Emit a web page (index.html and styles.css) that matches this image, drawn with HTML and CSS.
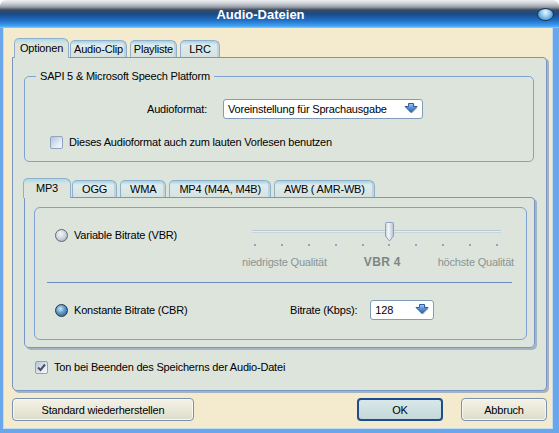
FILE: index.html
```html
<!DOCTYPE html>
<html lang="de">
<head>
  <meta charset="UTF-8">
  <title>Audio-Dateien</title>
  <link rel="stylesheet" href="styles.css">
</head>
<body>
  <div class="window">
    <div class="titlebar">
      <span class="title">Audio-Dateien</span>
      <span class="orb"></span>
    </div>

    <div class="client">
      <div class="tabs">
        <div class="tab active">Optionen</div>
        <div class="tab">Audio-Clip</div>
        <div class="tab">Playliste</div>
        <div class="tab">LRC</div>
      </div>

      <div class="panel">
        <fieldset class="group">
          <legend>SAPI 5 &amp; Microsoft Speech Platform</legend>
          <div class="format-row">
            <span class="format-label">Audioformat:</span>
            <div class="combo combo-format">
              <span>Voreinstellung für Sprachausgabe</span>
              <svg class="arrow" width="16" height="13" viewBox="0 0 16 13">
                <path d="M5.5 1.5 H10.5 V4.5 H14 L8 10.5 L2 4.5 H5.5 Z" fill="#a8acb0" opacity="0.7"/>
                <path d="M4.5 0.5 H9.5 V3.5 H13 L7 9.5 L1 3.5 H4.5 Z" fill="url(#arrowFill)" stroke="#2c5c9c" stroke-width="1"/>
                <defs>
                  <linearGradient id="arrowFill" x1="0" y1="0" x2="0" y2="1">
                    <stop offset="0" stop-color="#a9cdf2"/>
                    <stop offset="0.45" stop-color="#5b93d6"/>
                    <stop offset="1" stop-color="#2d62ad"/>
                  </linearGradient>
                </defs>
              </svg>
            </div>
          </div>
          <label class="check"><span class="box"></span>Dieses Audioformat auch zum lauten Vorlesen benutzen</label>
        </fieldset>

        <div class="tabs sub">
          <div class="tab active">MP3</div>
          <div class="tab">OGG</div>
          <div class="tab">WMA</div>
          <div class="tab">MP4 (M4A, M4B)</div>
          <div class="tab">AWB ( AMR-WB)</div>
        </div>

        <div class="subpanel">
          <div class="inner">
            <div class="vbr-row">
              <label class="radio"><span class="dot"></span>Variable Bitrate (VBR)</label>
              <div class="slider">
                <div class="track-area">
                  <div class="track"></div>
                  <svg class="thumb" width="11" height="20" viewBox="0 0 11 20">
                    <path d="M1.5 1.5 Q1.5 0.5 2.5 0.5 H8.5 Q9.5 0.5 9.5 1.5 V14 L5.5 19 L1.5 14 Z" fill="url(#thumbFill)" stroke="#8aa2bc"/>
                    <defs>
                      <linearGradient id="thumbFill" x1="0" y1="0" x2="1" y2="0">
                        <stop offset="0" stop-color="#c4d2de"/>
                        <stop offset="0.4" stop-color="#f4f8fb"/>
                        <stop offset="1" stop-color="#aebfcf"/>
                      </linearGradient>
                    </defs>
                  </svg>
                </div>
                <div class="ticks">
                  <i></i><i></i><i></i><i></i><i></i><i></i><i></i><i></i><i></i><i></i>
                </div>
                <div class="scale-labels">
                  <span>niedrigste Qualität</span>
                  <b>VBR 4</b>
                  <span>höchste Qualität</span>
                </div>
              </div>
            </div>

            <div class="separator"></div>

            <div class="cbr-row">
              <label class="radio selected"><span class="dot"></span>Konstante Bitrate (CBR)</label>
              <span class="bitrate-label">Bitrate (Kbps):</span>
              <div class="combo combo-bitrate">
                <span>128</span>
                <svg class="arrow" width="16" height="13" viewBox="0 0 16 13">
                  <path d="M5.5 1.5 H10.5 V4.5 H14 L8 10.5 L2 4.5 H5.5 Z" fill="#a8acb0" opacity="0.7"/>
                  <path d="M4.5 0.5 H9.5 V3.5 H13 L7 9.5 L1 3.5 H4.5 Z" fill="url(#arrowFill)" stroke="#2c5c9c" stroke-width="1"/>
                </svg>
              </div>
            </div>
          </div>
        </div>

        <label class="check checked end-sound">
          <span class="box">
            <svg width="11" height="11" viewBox="0 0 11 11"><path d="M2 5.5 L4.5 8 L9 2.5" fill="none" stroke="#4a5058" stroke-width="2"/></svg>
          </span>Ton bei Beenden des Speicherns der Audio-Datei
        </label>
      </div>

      <div class="buttons">
        <button class="btn btn-reset">Standard wiederherstellen</button>
        <button class="btn btn-default">OK</button>
        <button class="btn">Abbruch</button>
      </div>
    </div>
  </div>
</body>
</html>
```

FILE: styles.css
```css
* {
  box-sizing: border-box;
}
body {
  margin: 0;
  background: #fff;
  font-family: "Liberation Sans", Arial, sans-serif;
  font-size: 11px;
  letter-spacing: -0.2px;
  color: #000;
}
.window {
  width: 559px;
  height: 433px;
  display: flex;
  flex-direction: column;
}

/* title bar */
.titlebar {
  height: 28px;
  position: relative;
  border-radius: 6px 6px 0 0;
  background: linear-gradient(#eef0f2 0, #d2d6da 3px, #98a0aa 7px, #3a4a60 10px, #1a4a88 14px, #1f6cc0 20px, #3798ee 25px, #58b2f8 27px, #a6d2f7 28px);
  text-align: center;
  padding-right: 38px;
}
.title {
  display: inline-block;
  margin-top: 8px;
  color: #fff;
  font-size: 13px;
  font-weight: bold;
  letter-spacing: 0;
  line-height: 14px;
}
.orb {
  position: absolute;
  left: 537px;
  top: 8px;
  width: 17px;
  height: 13px;
  border-radius: 50%;
  border: 1px solid #1b3650;
  background: radial-gradient(ellipse at 50% 30%, #e8f6ff 0, #9fd2f4 35%, #4f97cc 75%, #2a6494 100%);
}

/* dialog body */
.client {
  flex: 1;
  background: #f4eacd;
  border-style: solid;
  border-color: #6aa6ea;
  border-width: 0 6px 4px 3px;
  box-shadow: inset 1px 0 #c2dcf6, inset -1px -1px #c2dcf6;
  padding: 10px 6px 0 9px;
}

/* tab strips */
.tabs {
  display: flex;
  align-items: flex-end;
  padding-left: 4px;
  height: 19px;
  position: relative;
  z-index: 1;
}
.tab {
  height: 17px;
  min-width: 40px;
  text-align: center;
  line-height: 16px;
  padding: 0 3px;
  margin-right: 3px;
  border: 1px solid #8fb0c8;
  border-bottom: none;
  border-radius: 5px 6px 0 0;
  background: linear-gradient(#9ed2e8, #dfeced 4px, #d6e2e0);
  box-shadow: inset -2px 0 0 #c0d2dc;
  white-space: nowrap;
}
.tab.active {
  height: 20px;
  line-height: 18px;
  margin: 0 1px -1px -2px;
  padding: 0 5px;
  background: linear-gradient(#a8dbee, #dde4dc 5px);
  box-shadow: none;
}
.tabs.sub {
  padding-left: 2px;
  margin-top: 16px;
}
.tabs.sub .tab {
  padding: 0 9px;
  margin-right: 3px;
}
.tabs.sub .tab.active {
  padding: 0 12px;
  margin: 0 1px -1px -2px;
}

.panel {
  height: 334px;
  background: #dde4dc;
  border: 1px solid #7796c4;
  border-radius: 0 4px 5px 5px;
  box-shadow: 2px 2px 0 #a3b3c4;
  padding: 11px 11px 0 10px;
}

/* group box */
.group {
  margin: 0 1px 0 1px;
  height: 93px;
  padding: 0;
  border: 1px solid #7ea2d2;
  border-radius: 5px;
}
.group legend {
  margin-left: 11px;
  padding: 0 4px;
  line-height: 14px;
}
.format-row {
  display: flex;
  align-items: center;
  margin-top: 16px;
}
.format-label {
  width: 182px;
  text-align: right;
  margin-right: 16px;
}
.combo {
  height: 20px;
  background: #fff;
  border: 1px solid #7f9db9;
  border-radius: 3px;
  display: flex;
  align-items: center;
  justify-content: space-between;
  padding: 0 2px 0 4px;
}
.combo-format {
  width: 200px;
}
.combo-bitrate {
  width: 64px;
}
.arrow {
  display: block;
}

/* checkboxes and radios */
.check {
  display: flex;
  align-items: center;
  line-height: 14px;
}
.check .box {
  width: 13px;
  height: 13px;
  margin-right: 6px;
  border: 1px solid #8ea4c4;
  border-radius: 2px;
  background: linear-gradient(135deg, #b4c4d8, #e8eef4 70%, #f6f8fa);
  display: flex;
  align-items: center;
  justify-content: center;
}
.group .check {
  margin: 16px 0 0 25px;
}
.end-sound {
  margin: 12px 0 0 12px;
}
.radio {
  display: flex;
  align-items: center;
  line-height: 14px;
}
.dot {
  width: 13px;
  height: 13px;
  margin-right: 6px;
  border-radius: 50%;
  border: 1px solid #5c6874;
  background: radial-gradient(circle at 40% 35%, #f4f6f8 0, #c8d2da 55%, #8e9ca8 100%);
}
.radio.selected .dot {
  border-color: #1e3550;
  background: radial-gradient(circle at 40% 35%, #cfe6f7 0, #5f98c4 45%, #23507e 100%);
}

/* inner sub tab page */
.subpanel {
  height: 151px;
  margin-left: 1px;
  border: 1px solid #7796c4;
  border-radius: 0 4px 5px 5px;
  box-shadow: 2px 2px 0 #a3b3c4;
  padding: 9px 7px 0 9px;
}
.inner {
  height: 133px;
  border: 1px solid #7ea2d2;
  border-radius: 6px;
  padding: 14px 12px 0 20px;
}
.vbr-row {
  display: flex;
  justify-content: space-between;
}
.vbr-row .radio {
  align-self: flex-start;
  margin-top: 6px;
}
.slider {
  width: 272px;
}
.track-area {
  height: 22px;
  padding-top: 8px;
  position: relative;
}
.track {
  margin: 0 13px 0 10px;
  height: 3px;
  border-top: 1px solid #b9c9d4;
  border-bottom: 1px solid #c7d4dc;
  background: #e6edf0;
}
.thumb {
  position: absolute;
  left: 142px;
  top: 0;
}
.ticks {
  display: flex;
  justify-content: space-between;
  margin: 0 16px 0 12px;
}
.ticks i {
  width: 2px;
  height: 2px;
  background: #8ca8c8;
}
.scale-labels {
  display: flex;
  justify-content: space-between;
  margin-top: 9px;
  color: #8a9494;
  line-height: 14px;
}
.scale-labels b {
  color: #7d8686;
  font-size: 12px;
  letter-spacing: 0.3px;
}
.separator {
  height: 1px;
  margin: 13px 2px 0 -8px;
  background: #6b8cc0;
}
.cbr-row {
  display: flex;
  align-items: center;
  margin-top: 17px;
}
.cbr-row .radio {
  width: 235px;
}
.bitrate-label {
  margin-right: 13px;
}

/* bottom buttons */
.buttons {
  display: flex;
  margin-top: 7px;
  padding-left: 0;
}
.btn {
  font: inherit;
  letter-spacing: inherit;
  height: 23px;
  width: 86px;
  padding: 0;
  border: 1px solid #7892b0;
  border-radius: 4px;
  background: linear-gradient(#f4f2e6, #e6e6d6 60%, #dcdccc);
  box-shadow: inset 0 0 0 1px #f8f8f0;
  color: #000;
}
.btn-reset {
  width: 182px;
  margin-right: auto;
}
.btn-default {
  margin-right: 18px;
  border: 2px solid #1e4c8c;
  background: linear-gradient(#d8e8e8, #c4d8da);
  box-shadow: none;
}
```
